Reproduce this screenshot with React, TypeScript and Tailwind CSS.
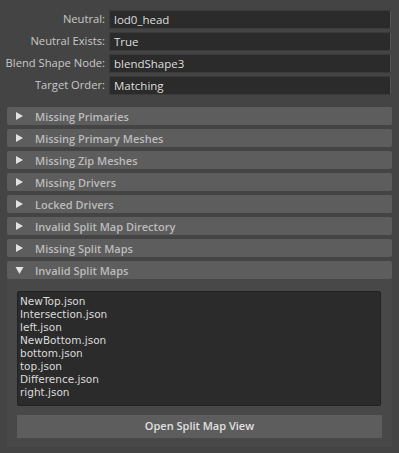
import React from "react";

const font = { fontFamily: '"Open Sans", "Noto Sans", "Liberation Sans", sans-serif' };
const listFont = { fontFamily: '"DejaVu Sans", "Liberation Sans", sans-serif' };

const fields: [string, string][] = [
  ["Neutral:", "lod0_head"],
  ["Neutral Exists:", "True"],
  ["Blend Shape Node:", "blendShape3"],
  ["Target Order:", "Matching"],
];

const sections = [
  "Missing Primaries",
  "Missing Primary Meshes",
  "Missing Zip Meshes",
  "Missing Drivers",
  "Locked Drivers",
  "Invalid Split Map Directory",
  "Missing Split Maps",
];

const files = [
  "NewTop.json",
  "Intersection.json",
  "left.json",
  "NewBottom.json",
  "bottom.json",
  "top.json",
  "Difference.json",
  "right.json",
];

function Tri({ open }: { open?: boolean }) {
  return (
    <svg width="9" height="10" viewBox="0 0 9 10" className="shrink-0">
      {open ? (
        <polygon points="0.5,2 8.5,2 4.5,9" fill="#e2e2e2" />
      ) : (
        <polygon points="1,1 8,5 1,9" fill="#e2e2e2" />
      )}
    </svg>
  );
}

function Header({ title, open }: { title: string; open?: boolean }) {
  return (
    <div className="h-[18px] flex items-center bg-[#5d5d5d] rounded-[2px] pl-[8px]">
      <Tri open={open} />
      <span className="ml-[11px] text-[11px] font-semibold text-[#bcbcbc] leading-none whitespace-nowrap">
        {title}
      </span>
    </div>
  );
}

export default function App() {
  return (
    <div
      className="w-[399px] h-[453px] bg-[#444444] overflow-hidden flex flex-col"
      style={font}
    >
      <div className="flex flex-col gap-[3px] pt-[10px]">
        {fields.map(([l, v]) => (
          <div key={l} className="flex items-center h-[19px]">
            <div className="w-[106px] text-right text-[11.2px] text-[#c9c9c9] pr-[1px] whitespace-nowrap">
              {l}
            </div>
            <div className="ml-[3px] w-[282px] h-[19px] bg-[#2b2b2b] border border-[#3a3a3a] border-r-[#555] rounded-[1px] flex items-center pl-[4px] text-[11.5px] text-[#dedede]">
              {v}
            </div>
          </div>
        ))}
      </div>
      <div className="mt-[12px] ml-[7px] w-[385px] flex flex-col gap-[4px]">
        {sections.map((s) => (
          <Header key={s} title={s} />
        ))}
        <div className="flex flex-col">
          <Header title="Invalid Split Maps" open />
          <div className="bg-[#484848] h-[168px] flex flex-col pt-[12px] pl-[10px]">
            <div
              className="w-[364px] h-[115px] bg-[#2b2b2b] border border-[#222] rounded-[2px] pt-[3px] pl-[2px] flex flex-col"
              style={listFont}
            >
              {files.map((f) => (
                <div key={f} className="h-[13px] leading-[13px] text-[10.5px] text-[#dadada] whitespace-nowrap">
                  {f}
                </div>
              ))}
            </div>
            <div className="mt-[9px] w-[365px] h-[23px] bg-[#5d5d5d] flex items-center justify-center text-[11px] font-semibold text-[#e0e0e0]">
              Open Split Map View
            </div>
          </div>
        </div>
      </div>
    </div>
  );
}
